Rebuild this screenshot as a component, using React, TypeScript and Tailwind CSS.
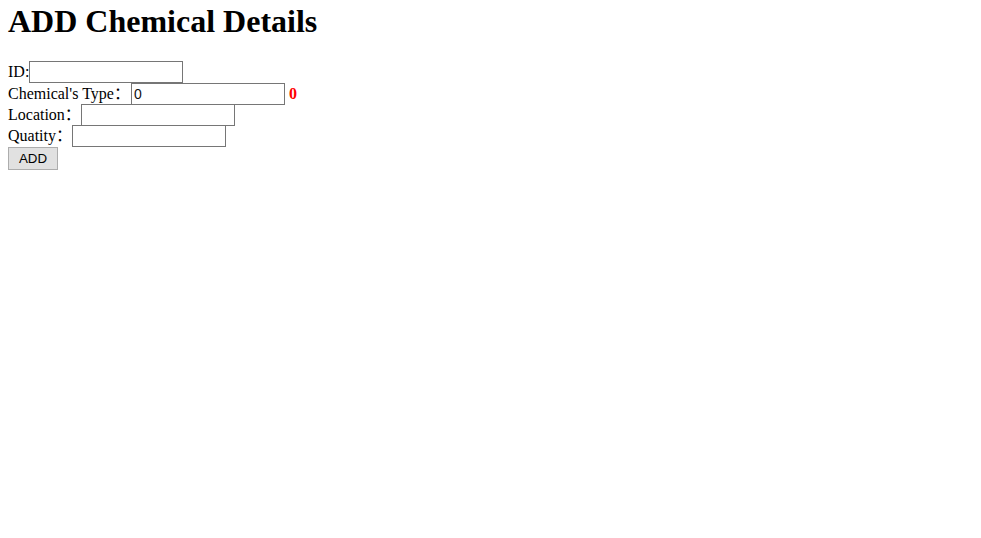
import React from "react";

const inputCls =
  "w-[154px] h-[22px] border border-[#767676] bg-white px-[2px] text-[14px] font-['Liberation_Sans',Arial,sans-serif] text-[#111] outline-none";

export default function App() {
  return (
    <div className="min-h-[538px] bg-white px-2 pt-[3px] text-[16px] text-black font-['Liberation_Serif','Noto_Sans_CJK_SC',serif]">
      <h1 className="text-[32px] font-bold leading-[37px] mb-[21px]">ADD Chemical Details</h1>
      <form className="flex flex-col items-start" onSubmit={(e) => e.preventDefault()}>
        <div className="flex items-center h-[22px]">
          <span>ID:</span>
          <input className={inputCls} />
        </div>
        <div className="flex items-center h-[21px]">
          <span>Chemical's Type：</span>
          <input className={`${inputCls} ml-[1px]`} defaultValue="0" />
          <span className="ml-[4px] font-bold text-[#ff0000]">0</span>
        </div>
        <div className="flex items-center h-[21px]">
          <span>Location：</span>
          <input className={inputCls} />
        </div>
        <div className="flex items-center h-[22px]">
          <span>Quatity：</span>
          <input className={inputCls} />
        </div>
        <button
          type="submit"
          className="h-[23px] w-[50px] border border-[#adadad] bg-[#e1e1e1] text-[13.33px] font-['Liberation_Sans',Arial,sans-serif] text-black"
        >
          ADD
        </button>
      </form>
    </div>
  );
}
